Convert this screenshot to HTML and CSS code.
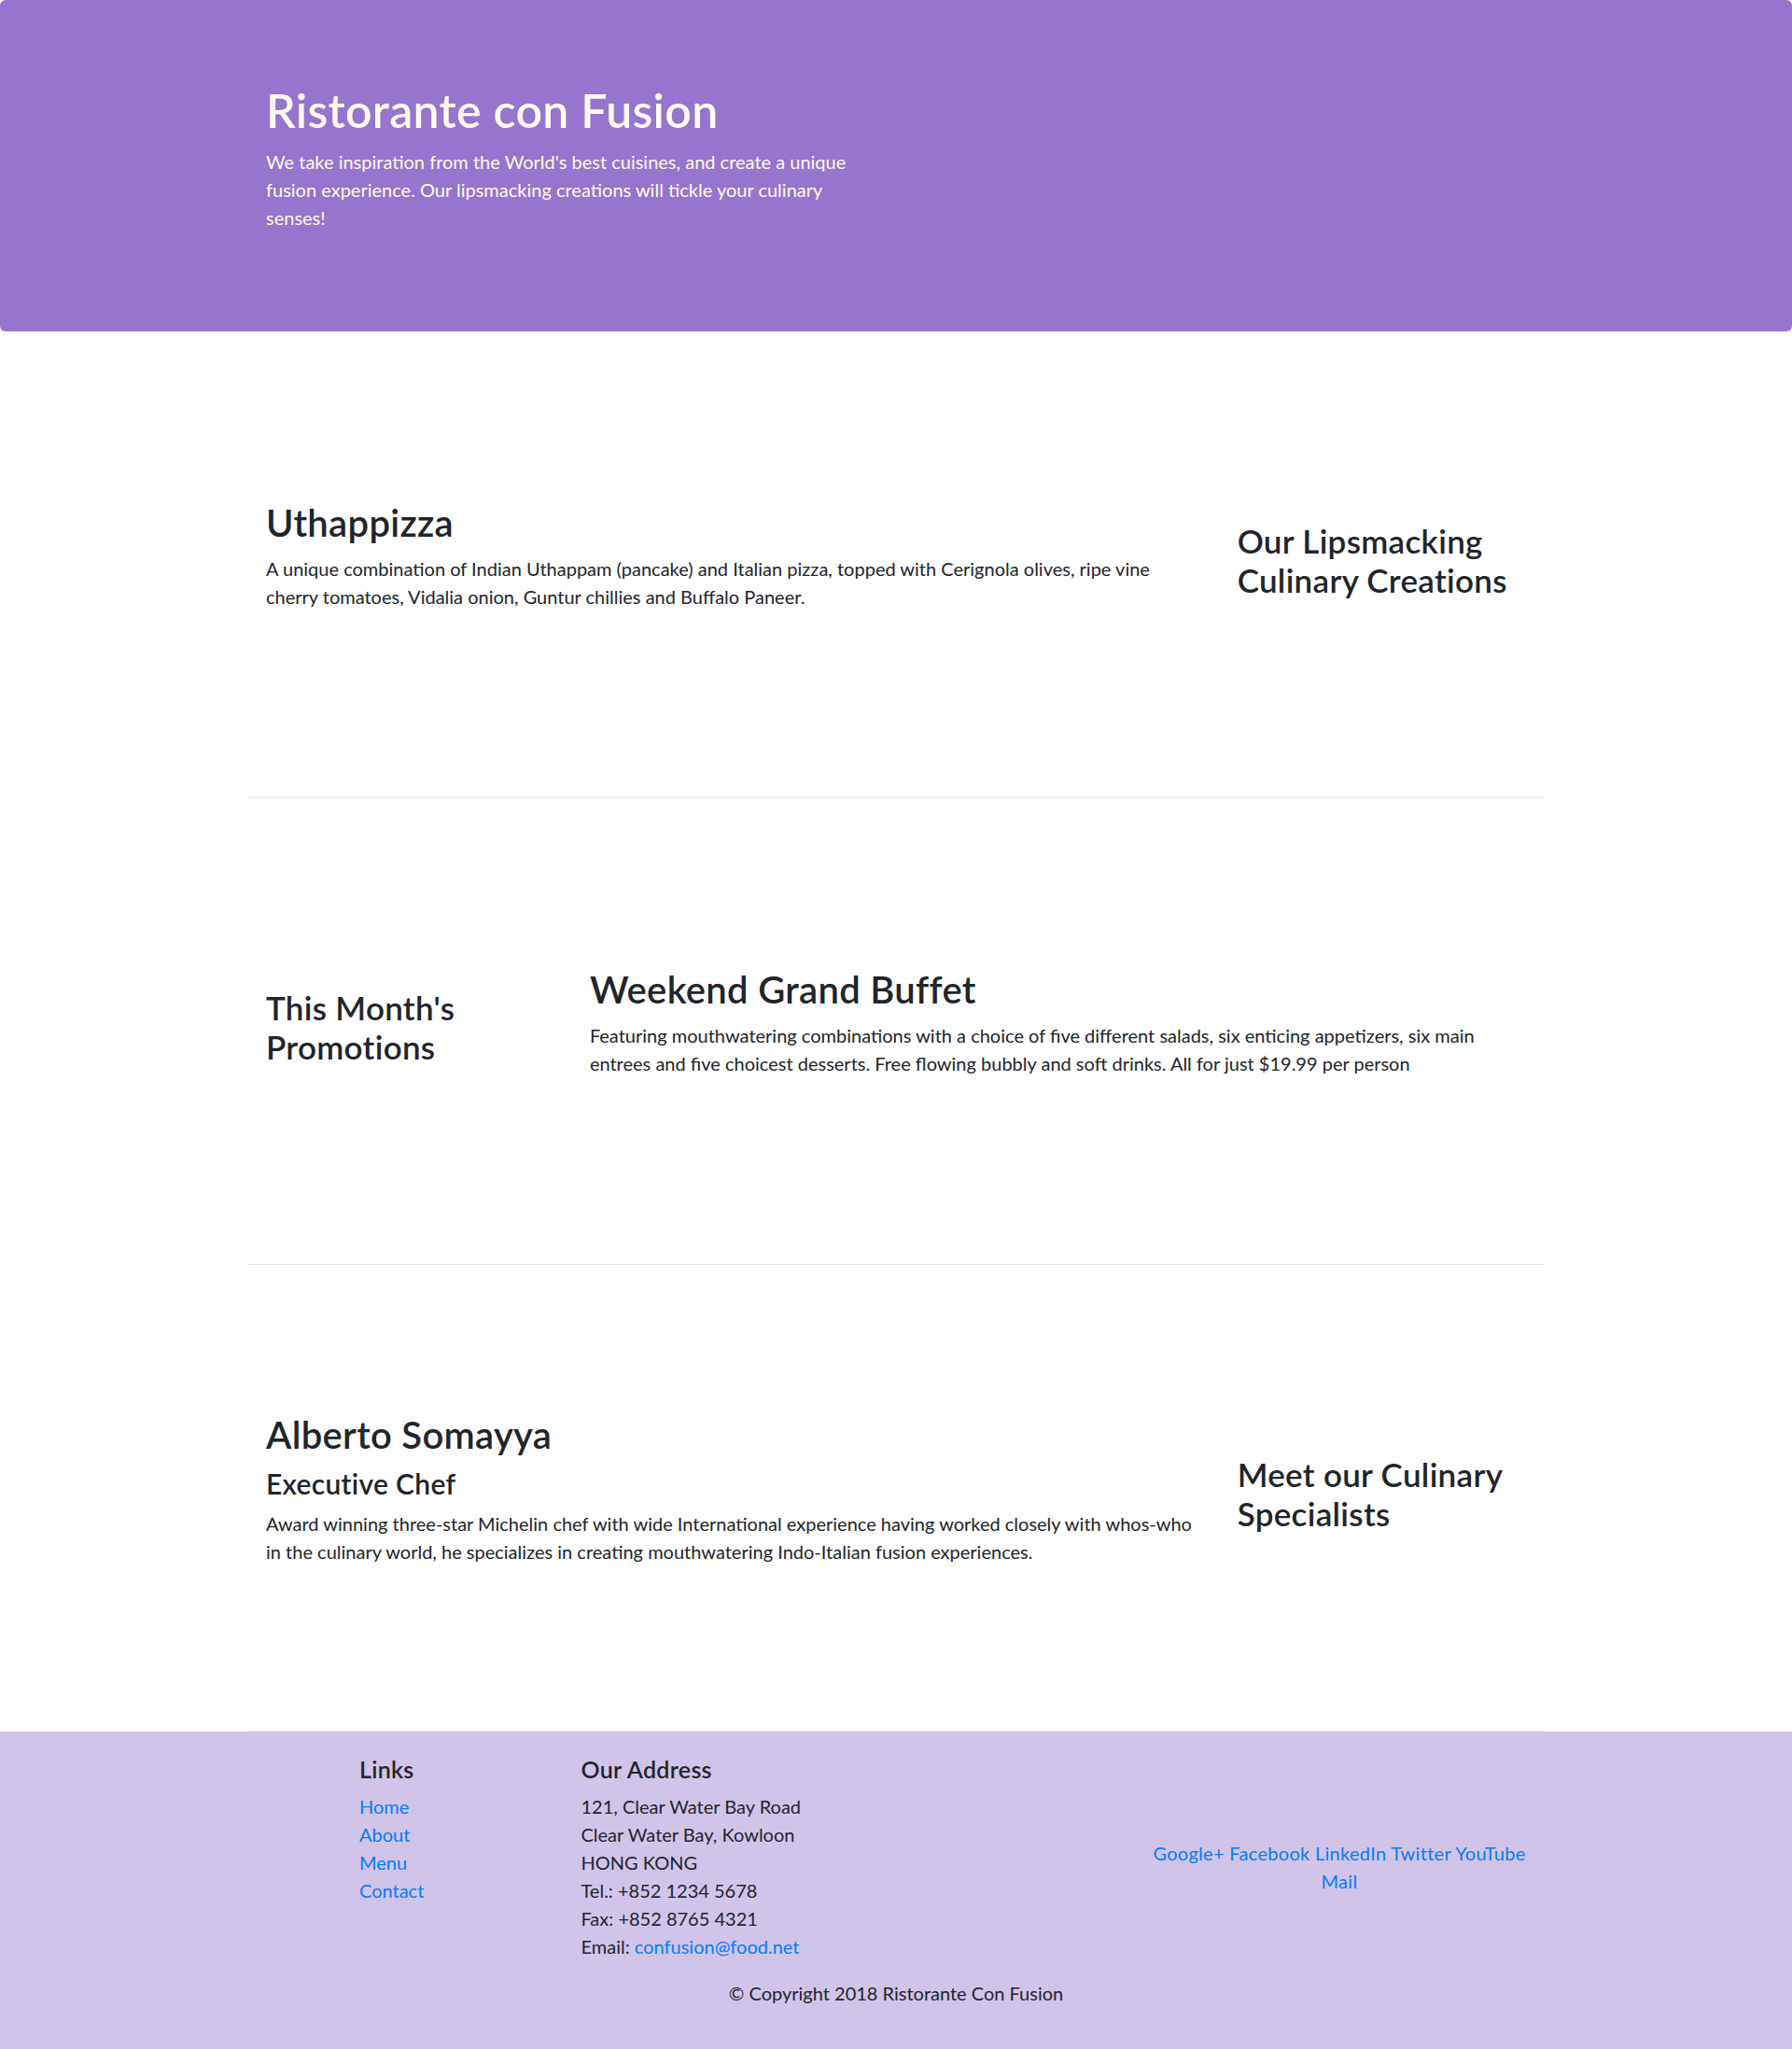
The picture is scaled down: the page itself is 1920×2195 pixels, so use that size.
FILE: index.html
```html
<!DOCTYPE html>
<html lang="en">
<head>
<meta charset="utf-8">
<title>Ristorante Con Fusion</title>
<link rel="stylesheet" href="styles.css">
</head>
<body>
<header class="jumbotron">
  <div class="container">
    <div class="row-header">
      <div class="col-half">
        <h1>Ristorante con Fusion</h1>
        <p>We take inspiration from the World's best cuisines, and create a unique fusion experience. Our lipsmacking creations will tickle your culinary senses!</p>
      </div>
    </div>
  </div>
</header>

<div class="container">
  <div class="row-content">
    <div class="col-main">
      <h2>Uthappizza</h2>
      <p>A unique combination of Indian Uthappam (pancake) and Italian pizza, topped with Cerignola olives, ripe vine cherry tomatoes, Vidalia onion, Guntur chillies and Buffalo Paneer.</p>
    </div>
    <div class="col-side">
      <h3>Our Lipsmacking Culinary Creations</h3>
    </div>
  </div>

  <div class="row-content">
    <div class="col-side">
      <h3>This Month's Promotions</h3>
    </div>
    <div class="col-main">
      <h2>Weekend Grand Buffet</h2>
      <p>Featuring mouthwatering combinations with a choice of five different salads, six enticing appetizers, six main entrees and five choicest desserts. Free flowing bubbly and soft drinks. All for just $19.99 per person</p>
    </div>
  </div>

  <div class="row-content">
    <div class="col-main">
      <h2>Alberto Somayya</h2>
      <h4>Executive Chef</h4>
      <p>Award winning three-star Michelin chef with wide International experience having worked closely with whos-who in the culinary world, he specializes in creating mouthwatering Indo-Italian fusion experiences.</p>
    </div>
    <div class="col-side">
      <h3>Meet our Culinary Specialists</h3>
    </div>
  </div>
</div>

<footer class="footer">
  <div class="container">
    <div class="row">
      <div class="col-links">
        <h5>Links</h5>
        <ul class="list-unstyled">
          <li><a href="#">Home</a></li>
          <li><a href="#">About</a></li>
          <li><a href="#">Menu</a></li>
          <li><a href="#">Contact</a></li>
        </ul>
      </div>
      <div class="col-address">
        <h5>Our Address</h5>
        <address>
          121, Clear Water Bay Road<br>
          Clear Water Bay, Kowloon<br>
          HONG KONG<br>
          Tel.: +852 1234 5678<br>
          Fax: +852 8765 4321<br>
          Email: <a href="#">confusion@food.net</a>
        </address>
      </div>
      <div class="col-social">
        <div class="text-center">
          <a href="#">Google+</a>
          <a href="#">Facebook</a>
          <a href="#">LinkedIn</a>
          <a href="#">Twitter</a>
          <a href="#">YouTube</a>
          <a href="#">Mail</a>
        </div>
      </div>
    </div>
    <div class="row row-center">
      <div class="col-auto">
        <p>© Copyright 2018 Ristorante Con Fusion</p>
      </div>
    </div>
  </div>
</footer>
</body>
</html>
```

FILE: styles.css
```css
*, *::before, *::after {
  box-sizing: border-box;
}

body {
  margin: 0;
  font-family: Lato, "Open Sans", sans-serif;
  font-size: 20px;
  line-height: 1.5;
  color: #212529;
  background: #fff;
}

h1, h2, h3, h4, h5 {
  margin: 0 0 10px;
  font-weight: 600;
  line-height: 1.2;
  letter-spacing: 0.3px;
}

h1 { font-size: 50px; }
h2 { font-size: 40px; }
h3 { font-size: 35px; }
h4 { font-size: 30px; }
h5 { font-size: 25px; }

p {
  margin: 0 0 20px;
}

a {
  color: #007bff;
  text-decoration: none;
}

.container {
  width: 1425px;
  margin: 0 auto;
  padding: 0 18.75px;
}

/* Header */
.jumbotron {
  background: #9575cd;
  color: #fffaf0;
  padding: 87.5px 37.5px;
  margin: 0;
  border-radius: 6px;
}

.row-header {
  display: flex;
}

.col-half {
  flex: 0 0 50%;
  padding: 0 18.75px;
}

/* Content rows */
.row-content {
  display: flex;
  align-items: center;
  min-height: 500px;
  padding: 62.5px 0;
  border-bottom: 1px solid #e6e6e6;
}

.col-main {
  flex: 1 1 0;
  min-width: 0;
  padding: 0 18.75px;
}

.col-side {
  flex: 0 0 25%;
  padding: 0 18.75px;
}

/* Footer */
.footer {
  background: #d1c4e9;
  padding: 25px 0;
}

.footer .row {
  display: flex;
  margin: 0 -18.75px;
}

.footer .row-center {
  justify-content: center;
}

.col-links {
  flex: 0 0 16.6667%;
  margin-left: 8.3333%;
  padding: 0 18.75px;
}

.col-address {
  flex: 0 0 41.6667%;
  padding: 0 18.75px;
}

.col-social {
  flex: 0 0 33.3333%;
  padding: 0 18.75px;
  align-self: center;
  letter-spacing: 0.3px;
}

.text-center {
  text-align: center;
}

.col-auto {
  flex: 0 0 auto;
  padding: 0 18.75px;
}

.list-unstyled {
  list-style: none;
  padding: 0;
  margin: 0 0 20px;
}

address {
  font-style: normal;
  margin: 0 0 20px;
}
```
